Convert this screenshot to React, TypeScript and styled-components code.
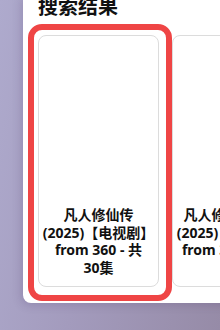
import React from "react";
import styled, { createGlobalStyle } from "styled-components";

const GlobalStyle = createGlobalStyle`
  html, body {
    margin: 0;
    padding: 0;
    width: 220px;
    height: 330px;
    overflow: hidden;
  }
  body {
    background: linear-gradient(100deg, #aeaacd 0%, #a39bbd 45%, #968ba7 100%);
    font-family: "Noto Sans", "Noto Sans CJK SC", sans-serif;
  }
`;

const Page = styled.div`
  height: 330px;
  padding-left: 23px;
  display: flex;
  flex-direction: column;
  align-items: flex-start;
`;

const Panel = styled.section`
  margin-top: -4px;
  width: 320px;
  flex-shrink: 0;
  background: #ffffff;
  border-radius: 0 0 0 8px;
  padding: 0 0 16px 15px;
  box-shadow: -2px 2px 10px rgba(60, 40, 90, 0.18);
`;

const Title = styled.h2`
  margin: 0 0 19px;
  font-size: 20px;
  line-height: 20px;
  font-weight: 700;
  color: #111111;
  font-family: "Noto Sans CJK SC", sans-serif;
`;

const Row = styled.div`
  display: flex;
  gap: 13px;
`;

const Card = styled.article`
  position: relative;
  width: 121px;
  height: 252px;
  flex-shrink: 0;
  box-sizing: border-box;
  border: 1px solid #dcdcdc;
  border-radius: 8px;
  background: #ffffff;
  display: flex;
  flex-direction: column;
`;

const Thumb = styled.div`
  height: 170px;
  flex-shrink: 0;
`;

const Caption = styled.div`
  padding: 0 2px;
  text-align: center;
  font-size: 14px;
  line-height: 17.5px;
  font-weight: 700;
  color: #111111;
  font-family: "Noto Sans", "Noto Sans CJK SC", sans-serif;
`;

const Line = styled.span`
  display: block;
  white-space: nowrap;
`;

const Highlight = styled.div`
  position: absolute;
  top: -12px;
  left: -11px;
  right: -14px;
  bottom: -15px;
  border: 6px solid #ef4545;
  border-radius: 14px;
  pointer-events: none;
`;

const results = [
  { lines: ["凡人修仙传", "(2025)【电视剧】", "from 360 - 共", "30集"], selected: true },
  { lines: ["凡人修仙传年番", "(2025)【电视剧】", "from 360 - 全集"], selected: false },
];

export default function App() {
  return (
    <>
      <GlobalStyle />
      <Page>
        <Panel>
          <Title>搜索结果</Title>
          <Row>
            {results.map((r, i) => (
              <Card key={i}>
                <Thumb />
                <Caption>
                  {r.lines.map((l) => (
                    <Line key={l}>{l}</Line>
                  ))}
                </Caption>
                {r.selected && <Highlight />}
              </Card>
            ))}
          </Row>
        </Panel>
      </Page>
    </>
  );
}
